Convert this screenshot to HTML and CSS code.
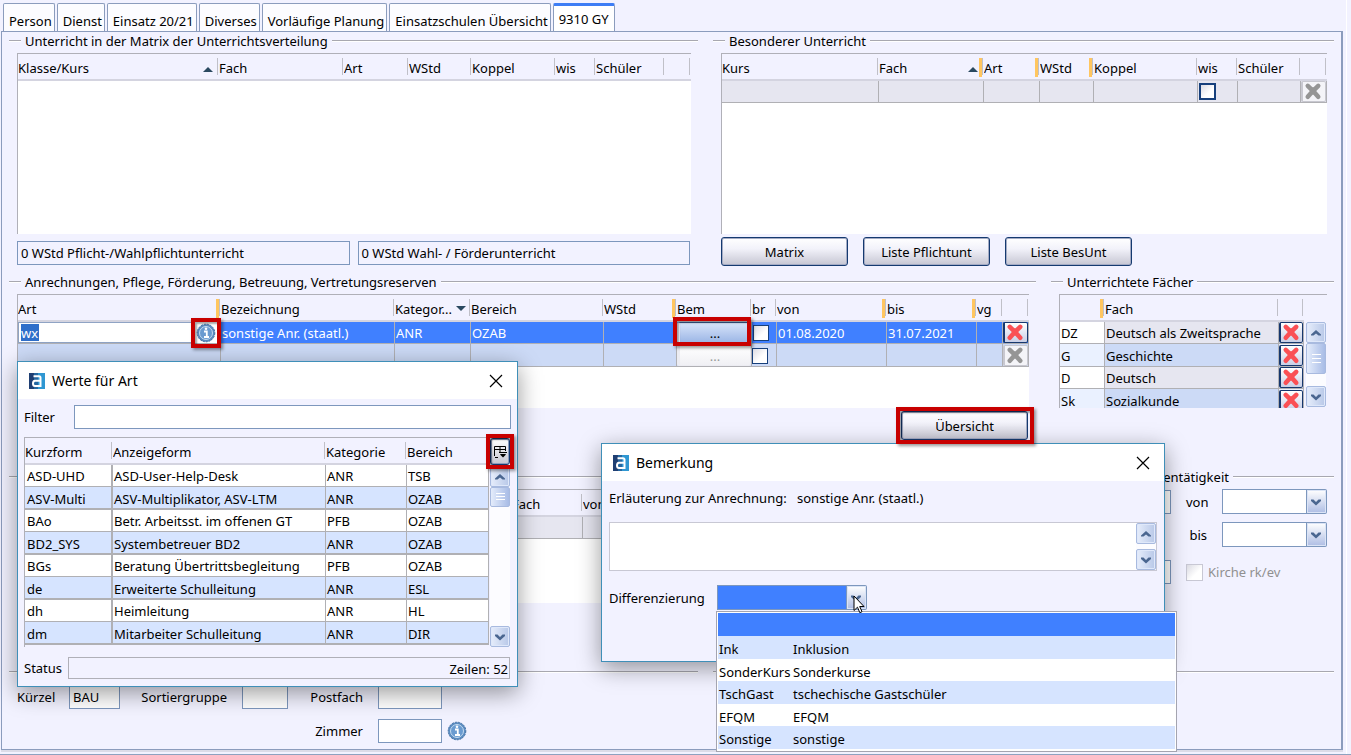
FILE: index.html
```html
<!DOCTYPE html>
<html lang="de">
<head>
<meta charset="utf-8">
<title>Lehrkraft – 9310 GY</title>
<link rel="stylesheet" href="styles.css">
</head>
<body>
<svg class="sprite" aria-hidden="true">
  <symbol id="x" viewBox="0 0 20 20"><path d="M4.500 4 8 7.500Q10 9 12 7.500L15.500 4M4.500 15.500 8 11.500Q10 10 12 11.500L15.500 15.500M10 8v3" fill="none" stroke="currentColor" stroke-width="4.800" stroke-linecap="round" stroke-linejoin="round"/></symbol>
  <symbol id="up" viewBox="0 0 12 12"><path d="M1 8.500V7.500L6 3 11 7.500V8.500H8.500L6 6.500 3.500 8.500z" fill="#4a6690"/></symbol>
  <symbol id="down" viewBox="0 0 12 12"><path d="M1 3.500 3.500 3.500 6 6 8.500 3.500 11 3.500 11 5 6 9.500 1 5z" fill="#4a6690"/></symbol>
  <symbol id="info" viewBox="0 0 20 20"><circle cx="10" cy="10" r="8.800" fill="#5b8cc0" stroke="#3f6ea3" stroke-width="1" stroke-dasharray="2 1"/><circle cx="10" cy="10" r="6.500" fill="#6a9bd0" stroke="#c5dbf0" stroke-width="1"/><path d="M8 8.500h2.800v5M8 14h5" fill="none" stroke="#fff" stroke-width="1.800"/><circle cx="10" cy="5.700" r="1.300" fill="#fff"/></symbol>
  <symbol id="logo" viewBox="0 0 16 16"><path d="M0 0h9v16H0z" fill="#1f3f73"/><path d="M5 0h11v16H5z" fill="#2f97d2"/><path d="M5 0h4v16H5z" fill="#2667a0"/><path d="M4.500 3.200H10q1.500 0 1.500 1.500V13H6q-2 0-2-2.500T6 7.800h5M11 13h1" fill="none" stroke="#fff" stroke-width="2"/></symbol>
  <symbol id="close" viewBox="0 0 14 14"><path d="M1 1 13 13M13 1 1 13" stroke="#000" stroke-width="1.200"/></symbol>
</svg>
<div class="app">
  <nav class="tabs" role="tablist">
    <button class="tab" role="tab">Person</button>
    <button class="tab" role="tab">Dienst</button>
    <button class="tab" role="tab">Einsatz 20/21</button>
    <button class="tab" role="tab">Diverses</button>
    <button class="tab" role="tab">Vorläufige Planung</button>
    <button class="tab" role="tab">Einsatzschulen Übersicht</button>
    <button class="tab active" role="tab" aria-selected="true">9310 GY</button>
  </nav>
  <main class="panel">
    <div class="row row-lessons">
      <section>
        <h2>Unterricht in der Matrix der Unterrichtsverteilung</h2>
        <div class="box">
          <table class="grid">
            <colgroup><col><col class="w125"><col class="w65"><col class="w63"><col class="w84"><col class="w40"><col class="w69"><col class="w26"></colgroup>
            <thead><tr><th>Klasse/Kurs<i class="asc"></i></th><th>Fach</th><th>Art</th><th>WStd</th><th>Koppel</th><th>wis</th><th>Schüler</th><th></th></tr></thead>
          </table>
        </div>
        <div class="sums"><output>0 WStd Pflicht-/Wahlpflichtunterricht</output><output>0 WStd Wahl- / Förderunterricht</output></div>
      </section>
      <section>
        <h2>Besonderer Unterricht</h2>
        <div class="box">
          <table class="grid">
            <colgroup><col><col class="w105"><col class="w56"><col class="w54"><col class="w104"><col class="w40"><col class="w63"><col class="w26"></colgroup>
            <thead><tr><th>Kurs</th><th class="key">Fach<i class="asc"></i></th><th class="key">Art</th><th class="key">WStd</th><th>Koppel</th><th>wis</th><th>Schüler</th><th></th></tr></thead>
            <tbody><tr class="grey"><td></td><td></td><td></td><td></td><td></td><td><input type="checkbox" aria-label="wis"></td><td></td><td class="act"><button class="del off" aria-label="Löschen"><svg><use href="#x"/></svg></button></td></tr></tbody>
          </table>
        </div>
        <div class="buttons"><button class="btn">Matrix</button><button class="btn">Liste Pflichtunt</button><button class="btn">Liste BesUnt</button></div>
      </section>
    </div>

    <div class="row row-credits">
      <section>
        <h2>Anrechnungen, Pflege, Förderung, Betreuung, Vertretungsreserven</h2>
        <div class="box">
          <table class="grid">
            <colgroup><col class="w203"><col><col class="w76"><col class="w133"><col class="w73"><col class="w75"><col class="w25"><col class="w110"><col class="w90"><col class="w26"><col class="w26"></colgroup>
            <thead><tr><th class="key">Art</th><th>Bezeichnung</th><th>Kategor...<i class="desc"></i></th><th>Bereich</th><th class="key">WStd</th><th>Bem</th><th>br</th><th class="key">von</th><th class="key">bis</th><th>vg</th><th></th></tr></thead>
            <tbody>
              <tr class="selected"><td class="edit"><span class="entry"><input type="text" value="wx" aria-label="Art" class="sel-text"><button class="info marked" aria-label="Werte anzeigen"><svg><use href="#info"/></svg></button></span></td><td>sonstige Anr. (staatl.)</td><td>ANR</td><td>OZAB</td><td></td><td class="act"><div class="marked cell"><button class="more">...</button></div></td><td><input type="checkbox" class="thin" aria-label="br"></td><td>01.08.2020</td><td>31.07.2021</td><td></td><td class="act"><button class="del" aria-label="Löschen"><svg><use href="#x"/></svg></button></td></tr>
              <tr class="blue"><td></td><td></td><td></td><td></td><td></td><td class="act"><button class="more off">...</button></td><td><input type="checkbox" class="thin" aria-label="br"></td><td></td><td></td><td></td><td class="act"><button class="del off" aria-label="Löschen"><svg><use href="#x"/></svg></button></td></tr>
            </tbody>
          </table>
        </div>
        <div class="buttons end"><div class="marked big"><button class="btn">Übersicht</button></div></div>
      </section>
      <section>
        <h2>Unterrichtete Fächer</h2>
        <div class="box with-scroll">
          <table class="grid subjects">
            <colgroup><col class="w45"><col><col class="w25"></colgroup>
            <thead><tr><th class="key"></th><th>Fach</th><th></th></tr></thead>
            <tbody>
              <tr><td>DZ</td><td>Deutsch als Zweitsprache</td><td class="act"><button class="del" aria-label="Löschen"><svg><use href="#x"/></svg></button></td></tr>
              <tr><td>G</td><td>Geschichte</td><td class="act"><button class="del" aria-label="Löschen"><svg><use href="#x"/></svg></button></td></tr>
              <tr><td>D</td><td>Deutsch</td><td class="act"><button class="del" aria-label="Löschen"><svg><use href="#x"/></svg></button></td></tr>
              <tr><td>Sk</td><td>Sozialkunde</td><td class="act"><button class="del" aria-label="Löschen"><svg><use href="#x"/></svg></button></td></tr>
            </tbody>
          </table>
          <div class="scroll"><button aria-label="Hoch"><svg><use href="#up"/></svg></button><span class="thumb tall"></span><button class="last" aria-label="Runter"><svg><use href="#down"/></svg></button></div>
        </div>
      </section>
    </div>

    <div class="row row-side">
      <section>
        <h2></h2>
        <div class="box">
          <table class="grid">
            <colgroup><col class="w494"><col class="w71"><col></colgroup>
            <thead><tr><th></th><th>Fach</th><th>von</th></tr></thead>
            <tbody><tr class="grey"><td></td><td></td><td></td></tr></tbody>
          </table>
        </div>
      </section>
      <section>
        <h2>Nebentätigkeit</h2>
        <div class="side-form">
          <input type="text" aria-label="Art der Tätigkeit"><label for="von">von</label><span class="combo"><select id="von"><option></option></select><span class="arrow"><svg><use href="#down"/></svg></span></span>
          <span></span><label for="bis">bis</label><span class="combo"><select id="bis"><option></option></select><span class="arrow"><svg><use href="#down"/></svg></span></span>
          <input type="text" aria-label="Umfang" class="church-row"><label class="check"><input type="checkbox" disabled>Kirche rk/ev</label>
        </div>
      </section>
    </div>

    <div class="row row-lessons">
      <section>
        <h2></h2>
        <div class="short">
          <label for="kz">Kürzel</label><input id="kz" type="text" value="BAU"><label for="sg" class="right">Sortiergruppe</label><input id="sg" type="text"><label for="pf" class="right">Postfach</label><input id="pf" type="text">
          <label for="zi" class="right room">Zimmer</label><input id="zi" type="text"><button class="info" aria-label="Info"><svg><use href="#info"/></svg></button>
        </div>
      </section>
      <section><h2></h2></section>
    </div>
  </main>

  <div class="dialog values" role="dialog" aria-labelledby="d1">
    <header><svg class="logo"><use href="#logo"/></svg><span id="d1">Werte für Art</span><button class="close" aria-label="Schließen"><svg><use href="#close"/></svg></button></header>
    <div class="filter"><label for="filter">Filter</label><input id="filter" type="text"></div>
    <div class="list">
      <table class="grid values-table">
        <colgroup><col class="w88"><col><col class="w81"><col class="w82"></colgroup>
        <thead><tr><th>Kurzform</th><th>Anzeigeform</th><th>Kategorie</th><th>Bereich</th></tr></thead>
        <tbody>
          <tr><td>ASD-UHD</td><td>ASD-User-Help-Desk</td><td>ANR</td><td>TSB</td></tr>
          <tr><td>ASV-Multi</td><td>ASV-Multiplikator, ASV-LTM</td><td>ANR</td><td>OZAB</td></tr>
          <tr><td>BAo</td><td>Betr. Arbeitsst. im offenen GT</td><td>PFB</td><td>OZAB</td></tr>
          <tr><td>BD2_SYS</td><td>Systembetreuer BD2</td><td>ANR</td><td>OZAB</td></tr>
          <tr><td>BGs</td><td>Beratung Übertrittsbegleitung</td><td>PFB</td><td>OZAB</td></tr>
          <tr><td>de</td><td>Erweiterte Schulleitung</td><td>ANR</td><td>ESL</td></tr>
          <tr><td>dh</td><td>Heimleitung</td><td>ANR</td><td>HL</td></tr>
          <tr><td>dm</td><td>Mitarbeiter Schulleitung</td><td>ANR</td><td>DIR</td></tr>
        </tbody>
      </table>
      <div class="list-side">
        <button class="columns marked" aria-label="Spalten"><svg viewBox="0 0 14 14"><path d="M1.500 11V1.500H12.500V6M1 4.500h12M7 1v6M2 12.500h3M6 7.500h8M7.500 9.500h5" fill="none" stroke="#000"/><path d="M7 9.500h6L10 12.500z"/></svg></button>
        <div class="scroll"><button aria-label="Hoch"><svg><use href="#up"/></svg></button><span class="thumb"></span><button class="last" aria-label="Runter"><svg><use href="#down"/></svg></button></div>
      </div>
    </div>
    <div class="status"><span>Status</span><output>Zeilen: 52</output></div>
  </div>

  <div class="dialog remark" role="dialog" aria-labelledby="d2">
    <header><svg class="logo"><use href="#logo"/></svg><span id="d2">Bemerkung</span><button class="close" aria-label="Schließen"><svg><use href="#close"/></svg></button></header>
    <div class="explain"><label for="note">Erläuterung zur Anrechnung:</label><span>sonstige Anr. (staatl.)</span></div>
    <div class="note"><textarea id="note"></textarea><div class="scroll"><button aria-label="Hoch"><svg><use href="#up"/></svg></button><button class="last" aria-label="Runter"><svg><use href="#down"/></svg></button></div></div>
    <div class="diff"><label for="diff">Differenzierung</label>
      <span class="combo open"><select id="diff"><option></option></select><span class="arrow"><svg><use href="#down"/></svg></span>
        <ul class="menu" role="listbox">
          <li role="option" class="current"></li>
          <li role="option"><span>Ink</span><span>Inklusion</span></li>
          <li role="option"><span>SonderKurs</span><span>Sonderkurse</span></li>
          <li role="option"><span>TschGast</span><span>tschechische Gastschüler</span></li>
          <li role="option"><span>EFQM</span><span>EFQM</span></li>
          <li role="option"><span>Sonstige</span><span>sonstige</span></li>
        </ul>
        <svg class="pointer" viewBox="0 0 12 19"><path d="M1 1v14.500l3.500-3.300 2.300 5.500 2.200-1-2.300-5.200H11z" fill="#fff" stroke="#000"/></svg>
      </span>
    </div>
  </div>
</div>
</body>
</html>
```

FILE: styles.css
```css
* { box-sizing: border-box; }
body { margin: 0; background: #f2f2ff; color: #000; font: 13px/18px "Noto Sans", "Open Sans", sans-serif; }
button, input, select, textarea { font: inherit; color: inherit; margin: 0; padding: 0; border-radius: 0; }
button { cursor: default; border: 0; background: none; }
h2 { margin: 0; font: inherit; }
.sprite { display: none; }

.app { position: relative; padding: 3px 8px 4px 1px; border-bottom: 1px solid #8ea2c0; overflow: hidden; box-shadow: inset -4px 0 #f2f2ff, inset -5px 0 #fff; }

.tabs { display: flex; gap: 2px; padding-left: 2px; }
.tab { height: 28px; padding: 6px 2px 0 5px; border: 1px solid #8b9cbd; border-bottom: 0; border-radius: 2px 2px 0 0; background: #fcfcff; white-space: nowrap; }
.tab.active { padding-top: 0; padding-right: 5px; border-top: 3px solid #3d7df5; background: #fff; line-height: 16px; }

.panel { border: 1px solid #8b9cbd; border-right-width: 2px; padding: 0 7px 6px; box-shadow: 0 2px #dcdce8; }
.row { display: grid; gap: 15px; }
.row > section { min-width: 0; }
.row-lessons { grid-template-columns: 689fr 621fr; }
.row-credits { grid-template-columns: minmax(0, 1fr) 283px; margin-top: 7px; }
.row-side { grid-template-columns: minmax(0, 1fr) 212px; margin-top: 28px; margin-bottom: 60px; }

h2 { display: flex; align-items: center; height: 18px; white-space: nowrap; }
h2::before, h2::after { content: ""; height: 2px; background: linear-gradient(#a8a8b0 50%, #fff 50%); }
h2::before { width: 12px; margin-right: 4px; }
h2::after { flex: 1; margin-left: 4px; }
h2:empty::before { margin-right: 0; }
h2:empty::after { margin-left: 0; }

.box { margin: 3px 7px 0 8px; height: 114px; overflow: hidden; border-top: 1px solid #b0b0b8; border-left: 1px solid #b0b0b8; background: #fff; }
.row-lessons .box { height: 181px; }
.grid { width: 100%; table-layout: fixed; border-collapse: separate; border-spacing: 0; }
th { position: relative; height: 27px; padding: 2px 0 0; overflow: hidden; text-align: left; font-weight: normal; white-space: nowrap; border-bottom: 2px solid #d4d4e0; background: linear-gradient(#c0c0c8, #c0c0c8) right 1px top 4px / 1px 17px no-repeat #f2f2ff; }
th.key { background: linear-gradient(#c0c0c8, #c0c0c8) right 1px top 4px / 1px 17px no-repeat, linear-gradient(#ffc660, #ffc660) right 2px top 4px / 3px 19px no-repeat #f2f2ff; }
td { height: 22px; padding: 0; white-space: nowrap; border-right: 1px solid #b0b0b4; border-bottom: 1px solid #b0b0b4; }
tbody tr:nth-child(even) td { height: 23px; padding-top: 1px; }
.asc, .desc { position: absolute; right: 6px; top: 13px; border: 5px solid transparent; border-top-width: 0; border-bottom-color: #2a4960; }
.desc { right: 5px; top: 11px; border-top: 5px solid #2a4960; border-bottom: 0; }
.grey td { background: #e6e6f0; }
.blue td { background: #ccdaf6; }
.selected td { padding-left: 1px; background: #4080ff; color: #fff; }
.selected td.act, .selected td.edit, td.act { padding: 0; }

.w25 { width: 25px; } .w26 { width: 26px; } .w40 { width: 40px; } .w45 { width: 45px; }
.w54 { width: 54px; } .w56 { width: 56px; } .w63 { width: 63px; } .w65 { width: 65px; }
.w69 { width: 69px; } .w71 { width: 71px; } .w73 { width: 73px; } .w75 { width: 75px; }
.w76 { width: 76px; } .w81 { width: 81px; } .w82 { width: 82px; } .w84 { width: 84px; }
.w88 { width: 88px; } .w90 { width: 90px; } .w104 { width: 104px; } .w105 { width: 105px; }
.w110 { width: 110px; } .w125 { width: 125px; } .w133 { width: 133px; }
.w203 { width: 203px; } .w494 { width: 494px; }

.sums { display: grid; grid-template-columns: 1fr 1fr; gap: 8px; margin: 7px 8px 0; }
.sums output { height: 24px; padding: 2px 3px; border: 1px solid #7d97bd; white-space: nowrap; }
.buttons { display: flex; gap: 15px; margin: 3px 8px 0; }
.btn { width: 127px; height: 29px; border: 1px solid #153a70; border-radius: 3px; background: linear-gradient(#fff, #f2f2fa 40%, #c6c6d2); box-shadow: inset 0 0 0 1px #a4abc4; }
.buttons.end { justify-content: flex-end; }

.marked { position: relative; }
.marked::after { content: ""; position: absolute; z-index: 1; inset: -5px; border: 4px solid #c80000; box-shadow: 2px 2px 3px rgba(0, 0, 0, .4), inset 2px 2px 2px rgba(0, 0, 0, .35); pointer-events: none; }
.marked.cell::after { inset: -5px 0 -3px -4px; }
.marked.big::after { inset: -4px -6px -4px -5px; }

input[type=text], .combo select { height: 24px; width: 100%; min-width: 0; padding: 0 3px; border: 1px solid #7d97bd; background: #fff; outline: 0; }
input[type=checkbox] { appearance: none; display: block; width: 17px; height: 17px; margin-left: 1px; border: 2px solid #17407c; background: linear-gradient(135deg, #dcdce4, #fff 60%); }
input[type=checkbox].thin { width: 16px; height: 16px; margin-left: 0; border-width: 1px; }
input[type=checkbox]:disabled { border: 1px solid #c8c8d4; }

.entry { display: flex; align-items: center; height: 21px; background: #fff; }
.entry input[type=text] { flex: 1; height: 21px; padding: 0 2px; border-color: #8fa3c4; }
.entry input.sel-text { background: linear-gradient(#2f6fca, #2f6fca) 2px 1px / 18px 17px no-repeat #fff; color: #fff; }
.info { width: 20px; height: 20px; flex: none; }
.info svg { display: block; width: 20px; height: 20px; }
.entry .info { width: 20px; height: 20px; margin: 0 4px; }
.more { display: block; width: 100%; height: 21px; border: 1px solid #3c5f96; border-left: 3px solid #f0f4ff; border-radius: 2px; background: linear-gradient(#d8e4fa, #9db7e6); color: #000; }
.more.off { border-color: #ececf2; background: linear-gradient(#fff, #f0f0f4); color: #999; }
.del { display: block; width: 100%; height: 21px; border: 1px solid #17386e; border-left-width: 2px; border-radius: 2px; background: linear-gradient(#fff, #c8cfe6); color: #fa5055; }
.del svg { display: block; width: 20px; height: 19px; }
.del.off { border-color: #c8c8d0; background: #f4f4f8; color: #959595; }

.with-scroll { display: flex; align-items: flex-start; background: #f2f2ff; }
.subjects { flex: 1; width: 0; }
.subjects td { background: #fff; padding-left: 1px; }
.subjects td:nth-child(2) { background: #e6e6f0; }
.subjects tr:nth-child(even) td { background: #eaf1ff; }
.subjects tr:nth-child(even) td:nth-child(2) { background: #ccdaf6; }
.subjects td.act { padding: 0; }
.scroll { display: flex; flex-direction: column; width: 20px; background: #fcfcff; }
.with-scroll .scroll { height: 85px; margin: 27px 1px 0 2px; }
.scroll button { height: 21px; border: 1px solid #a8badf; border-radius: 2px; background: linear-gradient(90deg, #e6edfb, #b8c8e8); box-shadow: inset 0 0 0 1px #dfe8fa; }
.scroll svg { display: block; width: 12px; height: 12px; margin: auto; }
.scroll .last { margin-top: auto; }
.thumb { height: 20px; border: 1px solid #a8badf; border-radius: 2px; background: linear-gradient(#fff, #fff) center 5px / 9px 1px no-repeat, linear-gradient(#fff, #fff) center 8px / 9px 1px no-repeat, linear-gradient(#fff, #fff) center 11px / 9px 1px no-repeat, linear-gradient(90deg, #e4ecfb, #a8bce6); }
.thumb.tall { height: 31px; background-position: center 10px, center 14px, center 18px, 0 0; }

.side-form { display: grid; grid-template-columns: 28px minmax(0, 1fr) 105px; column-gap: 15px; row-gap: 8px; margin: 3px 7px 0 21px; align-items: center; }
.side-form label { text-align: right; }
.side-form .church-row { margin-top: 5px; }
.side-form label.check { grid-column: 2 / 4; display: flex; align-items: center; gap: 5px; margin-top: 5px; color: #909090; }
.side-form .check input { margin: 0; }
.combo { position: relative; display: flex; height: 25px; }
.combo select { appearance: none; height: 25px; flex: 1; }
.arrow { width: 20px; height: 25px; padding: 6px 3px; flex: none; border: 1px solid #7d97bd; border-left: 0; border-radius: 0 2px 2px 0; background: linear-gradient(#fff, #aebde4); box-shadow: inset 0 0 0 1px #dbe4f6; pointer-events: none; }
.arrow svg { display: block; width: 12px; height: 12px; }

.short { display: grid; grid-template-columns: 52px 51px 122px 46px 90px 64px 20px; gap: 10px 0; margin: 4px 8px 0; align-items: center; }
.short .right { justify-self: end; margin-right: 15px; }
.short .room { grid-column: 1 / 6; }
.short .info { margin-left: 5px; }

.dialog { position: absolute; border: 1px solid #3f8fb8; background: #f2f2ff; box-shadow: 0 6px 22px rgba(0, 0, 0, .4); }
.dialog header { display: flex; align-items: center; gap: 7px; height: 37px; padding: 0 14px 0 11px; background: #fff; font-size: 14px; }
.logo { width: 16px; height: 16px; }
.close { width: 14px; height: 14px; margin-left: auto; }
.close svg { display: block; width: 14px; height: 14px; }

.values { left: 17px; top: 361px; width: 501px; }
.filter { display: flex; align-items: center; padding: 6px 6px 8px; }
.filter label { width: 50px; flex: none; }
.list { display: flex; margin: 0 7px 0 6px; height: 210px; border-top: 1px solid #b0b0b8; border-left: 1px solid #b0b0b8; }
.values-table { flex: 1; width: 0; align-self: flex-start; }
.values-table td { background: #fff; padding-left: 1px; }
.values-table tr:nth-child(even) td { padding-top: 2px; background: #d6e4ff; border-bottom-width: 2px; }
.values-table td:first-child { padding-left: 2px; border-right-width: 2px; }
.list-side { display: flex; flex-direction: column; width: 21px; padding-left: 1px; }
.columns { height: 27px; border: 1px solid #17386e; border-radius: 3px; background: linear-gradient(#fff, #c6c6d2); box-shadow: inset 0 0 0 1px #8b9cbd; }
.columns svg { display: block; width: 14px; height: 14px; margin: auto; }
.list-side .scroll { flex: 1; margin-top: 1px; }
.status { display: flex; align-items: center; padding: 10px 7px 7px 6px; }
.status span { width: 44px; flex: none; }
.status output { flex: 1; height: 22px; padding: 2px 1px; text-align: right; border: 1px solid #b0b0b8; }

.remark { left: 601px; top: 443px; width: 564px; height: 219px; }
.explain { display: flex; padding: 8px 7px 15px; }
.explain label { width: 188px; }
.note { display: flex; margin: 0 7px; height: 49px; border: 1px solid #c8c8d4; background: #fff; }
.note textarea { flex: 1; border: 0; resize: none; outline: 0; }
.diff { display: flex; align-items: center; padding: 14px 7px 0; }
.diff label { width: 108px; }
.combo.open select { flex: none; width: 130px; background: #4080ff; }
.menu { position: absolute; left: -1px; top: 26px; width: 461px; margin: 0; padding: 1px 1px 2px; list-style: none; border: 1px solid #a4a4b0; background: #fff; }
.menu li { display: grid; grid-template-columns: 74px 1fr; height: 22px; padding: 4px 1px 0; white-space: nowrap; }
.menu li:nth-child(even) { height: 23px; background: #d6e4ff; }
.menu li.current { height: 23px; background: #4080ff; }
.pointer { position: absolute; left: 136px; top: 10px; width: 12px; height: 19px; }
```
